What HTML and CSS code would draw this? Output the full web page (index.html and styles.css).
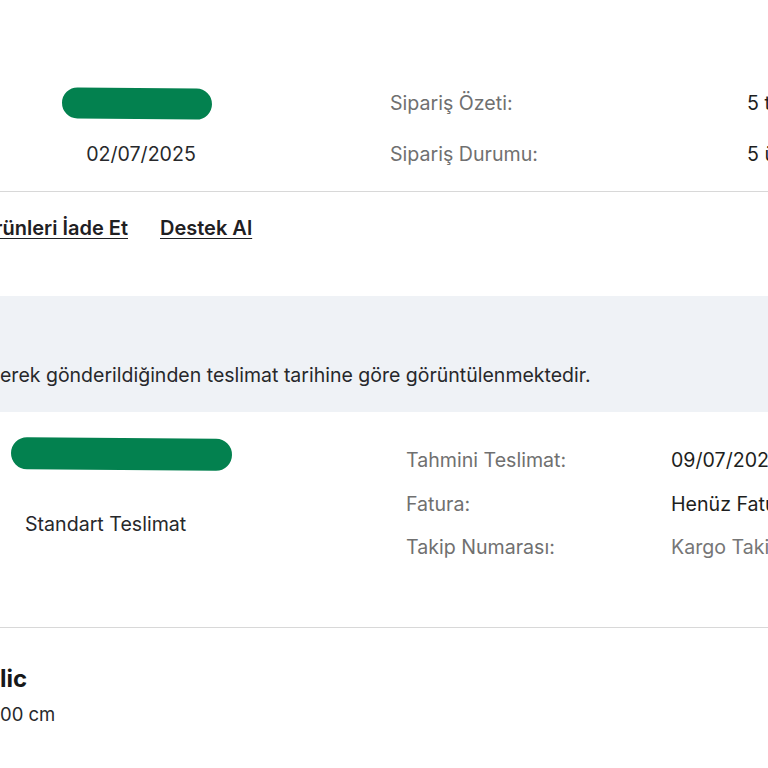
FILE: index.html
```html
<!DOCTYPE html>
<html lang="tr">
<head>
<meta charset="utf-8">
<title>Sipariş Detayı</title>
<link rel="stylesheet" href="styles.css">
</head>
<body>
<div class="page">
  <section class="summary">
    <div class="cell cell-left"><span class="redact redact-top"></span></div>
    <div class="cell label">Sipariş Özeti:</div>
    <div class="cell value">5 teslimat, 5 ürün</div>
    <div class="cell cell-left date">02/07/2025</div>
    <div class="cell label">Sipariş Durumu:</div>
    <div class="cell value">5 ürün teslim edildi</div>
  </section>

  <nav class="actions">
    <div class="action-clip"><a class="action" href="#">Ürünleri İade Et</a></div>
    <a class="action" href="#">Destek Al</a>
  </nav>

  <section class="notice">
    <p class="notice-text">erek gönderildiğinden teslimat tarihine göre görüntülenmektedir.</p>
  </section>

  <section class="shipment">
    <div class="ship-left">
      <span class="redact redact-ship"></span>
      <div class="ship-type">Standart Teslimat</div>
    </div>
    <div class="ship-info">
      <div class="label">Tahmini Teslimat:</div>
      <div class="value">09/07/2025</div>
      <div class="label">Fatura:</div>
      <div class="value">Henüz Faturalandırılmadı</div>
      <div class="label">Takip Numarası:</div>
      <div class="value muted">Kargo Takip</div>
    </div>
  </section>

  <section class="product">
    <div class="product-title">lic</div>
    <div class="product-size">00 cm</div>
  </section>
</div>
</body>
</html>
```

FILE: styles.css
```css
html, body {
  margin: 0;
  padding: 0;
  background: #ffffff;
}
body {
  width: 768px;
  height: 768px;
  overflow: hidden;
  font-family: Inter, "Noto Sans", "Liberation Sans", sans-serif;
  color: #222326;
}
.page {
  width: 768px;
}

.summary {
  display: grid;
  grid-template-columns: 282px 465px auto;
  grid-auto-rows: 32px;
  row-gap: 19px;
  align-items: center;
  padding: 87px 0 21px;
  border-bottom: 1px solid #d8d8d8;
  white-space: nowrap;
  overflow: hidden;
  font-size: 19.6px;
}
.cell-left {
  display: flex;
  justify-content: center;
}
.summary .label {
  padding-left: 108px;
}
.label {
  color: #707070;
  white-space: nowrap;
}
.value {
  color: #1d1e20;
  white-space: nowrap;
}
.value.muted {
  color: #767676;
}
.date {
  color: #27282b;
}

.redact {
  display: block;
  background: #03814f;
  border-radius: 16px;
}
.redact-top {
  width: 150px;
  height: 31px;
  margin-left: -8px;
  transform: rotate(0.6deg);
}
.redact-ship {
  width: 221px;
  height: 32px;
  margin-left: 11px;
  transform: rotate(0.5deg);
}

.actions {
  display: flex;
  gap: 32px;
  padding: 24px 0 0;
  height: 104px;
  box-sizing: border-box;
  font-size: 20px;
  line-height: 24px;
}
.action-clip {
  width: 128px;
  display: flex;
  justify-content: flex-end;
}
.action {
  color: #1f2023;
  font-weight: 600;
  text-decoration: underline;
  text-underline-offset: 3px;
  text-decoration-thickness: 1px;
  white-space: nowrap;
}

.notice {
  background: #eff2f6;
  height: 116px;
  box-sizing: border-box;
  padding-top: 67px;
}
.notice-text {
  margin: 0;
  font-size: 19.5px;
  line-height: 24px;
  color: #27282b;
  white-space: nowrap;
}

.shipment {
  display: flex;
  padding: 26px 0 68px;
  border-bottom: 1px solid #d8d8d8;
  font-size: 19.6px;
  line-height: 24px;
}
.ship-left {
  width: 406px;
  flex: none;
}
.ship-type {
  margin: 42px 0 0 25px;
  color: #27282b;
}
.ship-info {
  display: grid;
  grid-template-columns: 265px auto;
  row-gap: 19.5px;
  margin-top: 10px;
}

.product {
  padding-top: 36px;
}
.product-title {
  font-size: 24px;
  line-height: 30px;
  font-weight: 700;
  color: #17181a;
}
.product-size {
  margin-top: 8px;
  font-size: 18.5px;
  line-height: 24px;
  color: #27282b;
}
```
